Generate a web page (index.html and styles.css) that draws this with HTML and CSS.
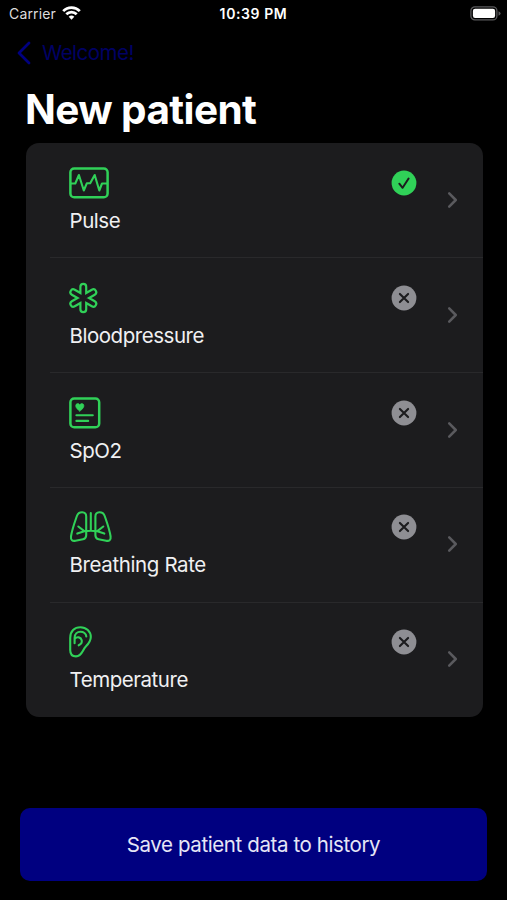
FILE: index.html
```html
<!DOCTYPE html>
<html lang="en">
<head>
<meta charset="utf-8">
<title>New patient</title>
<link rel="stylesheet" href="styles.css">
</head>
<body>
<div class="screen">
  <header class="status">
    <div class="status-left">
      <span class="carrier">Carrier</span>
      <svg class="wifi" width="19" height="14" viewBox="0 0 19 14" fill="none" stroke="#fff" stroke-width="2.7">
        <path d="M1.2 5.1a11.6 11.6 0 0 1 16.6 0"/><path d="M4.3 8.3a7.2 7.2 0 0 1 10.4 0"/>
        <path d="M9.5 13.7 6.7 10.8a4 4 0 0 1 5.6 0z" fill="#fff" stroke="none"/>
      </svg>
    </div>
    <span class="time">10:39 PM</span>
    <svg class="battery" width="31" height="15" viewBox="0 0 31 15">
      <rect x=".9" y=".9" width="26" height="13" rx="4" fill="none" stroke="#5a5a5c" stroke-width="1.3"/>
      <rect x="2.9" y="2.8" width="22.2" height="9.2" rx="2.2" fill="#fff"/>
      <path d="M28.5 5.2q2.1.8 2.1 2.3t-2.1 2.3z" fill="#5a5a5c"/>
    </svg>
  </header>
  <nav class="nav">
    <svg width="14" height="24" viewBox="0 0 14 24" fill="none" stroke="#000080" stroke-width="2.8" stroke-linecap="round" stroke-linejoin="round"><path d="M12 2 2 12l10 10"/></svg>
    <a class="back">Welcome!</a>
  </nav>
  <h1 class="title">New patient</h1>
  <ul class="list">
    <li class="row">
      <div class="item">
        <svg class="icon" width="44" height="32" viewBox="0 0 44 32"><rect x="1.4" y="1.4" width="37.2" height="28.8" rx="3.8"/><path class="fine" d="M2 16.500h4.300L9.900 8l4.900 15.500 3-7.200h3.400L25.700 8l4.600 15.500 2.700-7H38"/></svg>
        <span class="label pulse">Pulse</span>
      </div>
      <svg class="badge" width="26" height="26" viewBox="0 0 26 26"><circle cx="13" cy="13" r="12.4" fill="#30d158"/><path d="m8.300 13.700 3.300 4.100 6-9.300" fill="none" stroke="#1c1c1e" stroke-width="2" stroke-linecap="round" stroke-linejoin="round"/></svg>
      <svg class="chevron" width="12" height="18" viewBox="0 0 12 18"><path d="m2.200 2.400 6.600 6.600-6.600 6.600"/></svg>
    </li>
    <li class="row">
      <div class="item">
        <svg class="icon" width="44" height="32" viewBox="0 0 44 32"><g class="arms-outer"><path d="M14.300 4.700v22.600M4.300 10.200l20 11.600M24.300 10.200l-20 11.600"/></g><g class="arms-inner"><path d="M14.300 4.700v22.600M4.300 10.200l20 11.600M24.300 10.200l-20 11.600"/></g></svg>
        <span class="label bp">Bloodpressure</span>
      </div>
      <svg class="badge" width="26" height="26" viewBox="0 0 26 26"><circle cx="13" cy="13" r="12.4" fill="#8e8e93"/><path d="m8.900 8.900 8.200 8.200m0-8.200-8.200 8.200" stroke="#1c1c1e" stroke-width="2.1" stroke-linecap="round"/></svg>
      <svg class="chevron" width="12" height="18" viewBox="0 0 12 18"><path d="m2.200 2.400 6.600 6.600-6.600 6.600"/></svg>
    </li>
    <li class="row">
      <div class="item">
        <svg class="icon" width="44" height="32" viewBox="0 0 44 32"><rect x="1.4" y="1.4" width="28.8" height="28.8" rx="3.8"/><path d="M10.800 14.100C8.500 12.400 6.700 10.800 6.700 8.900c0-2.700 3-3.100 4.100-.9 1.100-2.200 4.100-1.800 4.100.9 0 1.900-1.800 3.500-4.100 5.200z" fill="#30d158" stroke-width=".6"/><path class="fine" d="M7.400 18.200h16.400M7.400 23.900h11.800"/></svg>
        <span class="label spo">SpO2</span>
      </div>
      <svg class="badge" width="26" height="26" viewBox="0 0 26 26"><circle cx="13" cy="13" r="12.4" fill="#8e8e93"/><path d="m8.900 8.900 8.200 8.200m0-8.200-8.200 8.200" stroke="#1c1c1e" stroke-width="2.1" stroke-linecap="round"/></svg>
      <svg class="chevron" width="12" height="18" viewBox="0 0 12 18"><path d="m2.200 2.400 6.600 6.600-6.600 6.600"/></svg>
    </li>
    <li class="row">
      <div class="item">
        <svg class="icon" width="44" height="32" viewBox="0 0 44 32"><g class="fine"><path d="M17.200 24.200V5.500c0-5.500-7.500-5.500-9.300-.5C5.800 11 3 18.500 2 25.500c-.5 3.700 1.500 4.800 4.500 4.200l7.500-1.500c2.300-.5 3.200-1.700 3.200-4z"/><path d="M26.400 24.200V5.500c0-5.500 7.500-5.500 9.300-.5 2.100 6 4.900 13.500 5.900 20.500.5 3.700-1.500 4.800-4.500 4.200l-7.500-1.500c-2.300-.5-3.200-1.700-3.200-4z"/><path d="M21.800 2v17.600M8.300 22.600l7-2.400q6.500-1 13 0l7 2.400M15.300 20.200l-6-4.700M28.300 20.200l6-4.700"/></g></svg>
        <span class="label br">Breathing Rate</span>
      </div>
      <svg class="badge" width="26" height="26" viewBox="0 0 26 26"><circle cx="13" cy="13" r="12.4" fill="#8e8e93"/><path d="m8.900 8.900 8.200 8.200m0-8.200-8.200 8.200" stroke="#1c1c1e" stroke-width="2.1" stroke-linecap="round"/></svg>
      <svg class="chevron" width="12" height="18" viewBox="0 0 12 18"><path d="m2.200 2.400 6.600 6.600-6.600 6.600"/></svg>
    </li>
    <li class="row">
      <div class="item">
        <svg class="icon" width="44" height="32" viewBox="0 0 44 32"><g class="fine"><path d="M1.200 12C1.200 5 5.500 1.300 11.400 1.300S21.800 5.500 21.800 11c0 4-2 6.500-5 9.500-3.500 3.500-3.800 9.900-9.800 9.900-3.700 0-5.800-2.600-5.800-6.500z"/><path d="M5.600 17.200V12c0-8.500 11.700-7.500 11.700-1.500M5.800 12.800C8 10.300 12 11 12.700 14.300c.5 2.400-.6 4-3 5"/></g></svg>
        <span class="label temp">Temperature</span>
      </div>
      <svg class="badge" width="26" height="26" viewBox="0 0 26 26"><circle cx="13" cy="13" r="12.4" fill="#8e8e93"/><path d="m8.900 8.900 8.200 8.200m0-8.200-8.200 8.200" stroke="#1c1c1e" stroke-width="2.1" stroke-linecap="round"/></svg>
      <svg class="chevron" width="12" height="18" viewBox="0 0 12 18"><path d="m2.200 2.400 6.600 6.600-6.600 6.600"/></svg>
    </li>
  </ul>
  <button class="save">Save patient data to history</button>
</div>
</body>
</html>
```
FILE: styles.css
```css
* { box-sizing: border-box; }
body { margin: 0; background: #000; color: #fff; font-family: Inter, "Liberation Sans", sans-serif; }
.screen { width: 507px; height: 900px; display: flex; flex-direction: column; overflow: hidden; }
.status { height: 27px; flex: none; display: grid; grid-template-columns: 1fr auto 1fr; align-items: center; padding: 0 6px 0 9px; }
.status-left { display: flex; align-items: center; gap: 6px; }
.carrier { font-size: 14px; color: #ddd; width: 47px; white-space: nowrap; letter-spacing: .15px; }
.wifi { margin-top: -2px; }
.time { font-size: 14px; font-weight: 600; white-space: nowrap; letter-spacing: .6px; margin: 0 1px 0 -2px; }
.battery { justify-self: end; }
.nav { height: 51px; flex: none; display: flex; align-items: center; gap: 11px; padding-left: 17px; }
.back { font-size: 20.5px; color: #000064; letter-spacing: -.5px; }
.title { margin: 7px 0 0 25px; height: 57.5px; line-height: 50px; font-size: 40.5px; font-weight: 700; white-space: nowrap; letter-spacing: -.6px; }
.list { list-style: none; margin: 0 24.5px 0 25.5px; padding: 0; height: 574px; flex: none; background: #1c1c1e; border-radius: 13px; display: grid; grid-template-rows: repeat(5, 1fr); }
.row { margin-left: 24px; padding: 24.5px 24px 0 19.5px; display: flex; align-items: flex-start; }
.row + .row { border-top: 1px solid #29292b; padding-top: 23.5px; }
.item { flex: 1; display: flex; flex-direction: column; gap: 8px; }
.icon { display: block; fill: none; stroke: #30d158; stroke-width: 2.5; stroke-linecap: round; stroke-linejoin: round; }
.fine { stroke-width: 2.1; }
.arms-outer { stroke-width: 8; }
.arms-inner { stroke: #1c1c1e; stroke-width: 3.6; }
.label { font-size: 20.5px; line-height: 28px; color: #f0f0f2; white-space: nowrap; letter-spacing: -.46px; margin-left: .5px; }
.br { letter-spacing: -.38px; }
.badge { margin: 3px 30px 0 0; flex: none; }
.chevron { margin-top: 24px; flex: none; fill: none; stroke: #5a5a5e; stroke-width: 2.5; stroke-linecap: round; stroke-linejoin: round; }
.save { margin: 91px 20px 0; height: 73px; flex: none; border: 0; border-radius: 10px; background: #000080; color: #e6e6f6; font: 400 20.5px/73px Inter, "Liberation Sans", sans-serif; letter-spacing: -.4px; padding: 0; }
```
